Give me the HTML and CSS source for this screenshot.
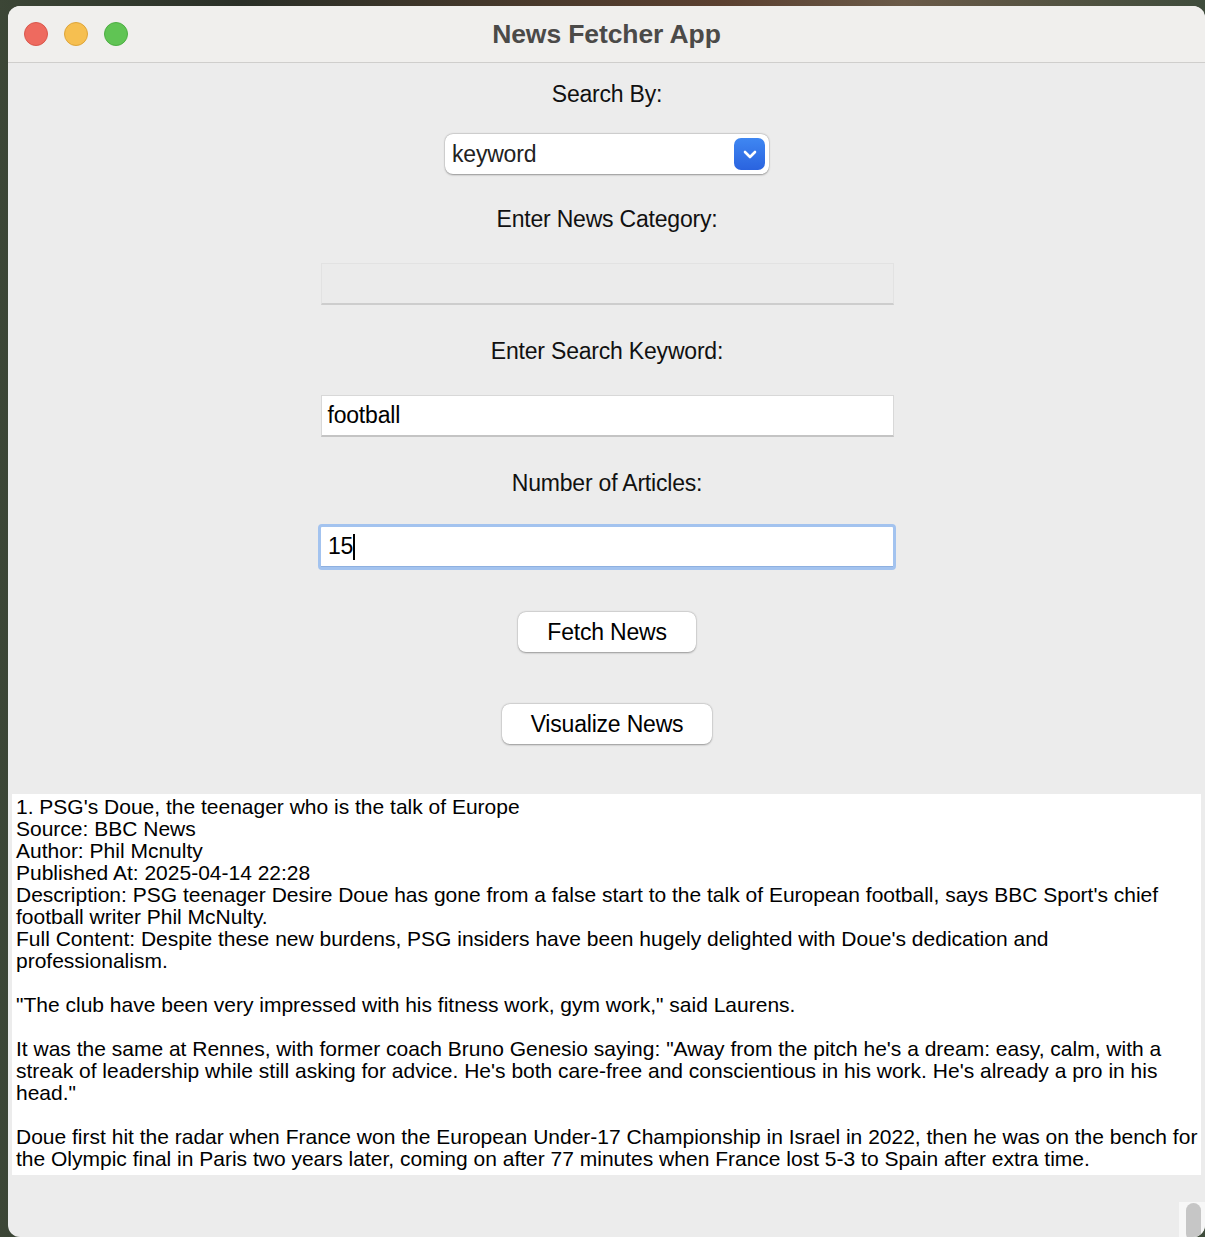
FILE: index.html
```html
<!DOCTYPE html>
<html>
<head>
<meta charset="utf-8">
<title>News Fetcher App</title>
<link rel="stylesheet" href="styles.css">
</head>
<body>
<div class="window">
  <div class="titlebar">
    <div class="lights">
      <span class="light red"></span>
      <span class="light yellow"></span>
      <span class="light green"></span>
    </div>
    <div class="title">News Fetcher App</div>
  </div>
  <div class="content">
    <div class="label l-search">Search By:</div>
    <div class="select">
      <span class="select-text">keyword</span>
      <span class="select-btn">
        <svg width="16" height="11" viewBox="0 0 16 11"><path d="M3 3 L8 8 L13 3" fill="none" stroke="#fff" stroke-width="2.6" stroke-linecap="round" stroke-linejoin="round"/></svg>
      </span>
    </div>
    <div class="label l-cat">Enter News Category:</div>
    <div class="entry entry-disabled"></div>
    <div class="label l-kw">Enter Search Keyword:</div>
    <div class="entry entry-white"><span class="entry-text">football</span></div>
    <div class="label l-num">Number of Articles:</div>
    <div class="entry-focus"><div class="entry-inner"><span class="entry-text">15</span><span class="caret"></span></div></div>
    <button class="btn btn-fetch">Fetch News</button>
    <button class="btn btn-vis">Visualize News</button>
    <div class="output">1. PSG's Doue, the teenager who is the talk of Europe
Source: BBC News
Author: Phil Mcnulty
Published At: 2025-04-14 22:28
Description: PSG teenager Desire Doue has gone from a false start to the talk of European football, says BBC Sport's chief
football writer Phil McNulty.
Full Content: Despite these new burdens, PSG insiders have been hugely delighted with Doue's dedication and
professionalism.

"The club have been very impressed with his fitness work, gym work," said Laurens.

It was the same at Rennes, with former coach Bruno Genesio saying: "Away from the pitch he's a dream: easy, calm, with a
streak of leadership while still asking for advice. He's both care-free and conscientious in his work. He's already a pro in his
head."

Doue first hit the radar when France won the European Under-17 Championship in Israel in 2022, then he was on the bench for
the Olympic final in Paris two years later, coming on after 77 minutes when France lost 5-3 to Spain after extra time.</div>
    <div class="scroll"><span class="thumb"></span></div>
  </div>
</div>
</body>
</html>
```

FILE: styles.css
```css
html, body {
  margin: 0;
  padding: 0;
}
body {
  width: 1205px;
  height: 1237px;
  overflow: hidden;
  background: linear-gradient(90deg, #3c4636 0%, #2a2f27 20%, #4a3a2c 45%, #5b4030 60%, #6a5a48 75%, #3f4c3c 100%);
  font-family: "Liberation Sans", Arial, Helvetica, sans-serif;
}
.window {
  margin: 6px 0 0 8px;
  width: 1197px;
  height: 1231px;
  border-radius: 12px;
  overflow: hidden;
  background: #ececec;
  display: flex;
  flex-direction: column;
}
.titlebar {
  height: 56px;
  flex: none;
  background: #f0efed;
  border-bottom: 1px solid #cfcecc;
  display: flex;
  align-items: center;
  position: relative;
}
.lights {
  display: flex;
  gap: 16px;
  padding-left: 16px;
  position: relative;
  z-index: 1;
}
.light {
  width: 24px;
  height: 24px;
  border-radius: 50%;
  box-sizing: border-box;
}
.red { background: #ee6a5f; border: 1px solid #d9574c; }
.yellow { background: #f6bf50; border: 1px solid #dea53a; }
.green { background: #60c454; border: 1px solid #4dae43; }
.title {
  position: absolute;
  left: 0;
  right: 0;
  top: 0;
  bottom: 0;
  display: flex;
  align-items: center;
  justify-content: center;
  font-weight: bold;
  font-size: 26.5px;
  color: #4b4a48;
  letter-spacing: -0.1px;
}
.content {
  flex: 1;
  position: relative;
  display: flex;
  flex-direction: column;
  align-items: center;
  padding-top: 15px;
  padding-left: 1px;
}
.label {
  height: 30px;
  line-height: 30px;
  font-size: 23px;
  color: #111;
  letter-spacing: -0.2px;
  padding-top: 1px;
}
.select {
  margin-top: 25px;
  width: 324px;
  height: 40px;
  box-sizing: border-box;
  background: #fff;
  border-radius: 8px;
  box-shadow: 0 0.5px 2px rgba(0,0,0,0.35), 0 0 0 0.5px rgba(0,0,0,0.08);
  display: flex;
  align-items: center;
  justify-content: space-between;
  padding: 0 4px 0 7px;
}
.select-text {
  font-size: 23px;
  color: #222;
  letter-spacing: -0.2px;
}
.select-btn {
  width: 31px;
  height: 32px;
  border-radius: 7px;
  background: linear-gradient(#3f87f2, #2a63df);
  display: flex;
  align-items: center;
  justify-content: center;
}
.l-cat { margin-top: 29px; }
.l-kw { margin-top: 30px; }
.l-num { margin-top: 30px; }
.entry {
  margin-top: 29px;
  width: 573px;
  height: 42px;
  box-sizing: border-box;
  display: flex;
  align-items: center;
  padding-left: 6px;
}
.entry-disabled {
  background: #ebebeb;
  border: 1px solid #e2e2e2;
  border-bottom: 2px solid #cdcdcd;
}
.entry-white {
  background: #fff;
  border: 1px solid #d8d8d8;
  border-bottom: 2px solid #c4c4c4;
}
.entry-text {
  font-size: 23px;
  color: #000;
  letter-spacing: -0.2px;
}
.entry-focus {
  margin-top: 26px;
  width: 578px;
  height: 46px;
  box-sizing: border-box;
  border: 3px solid #a3c3ef;
  border-radius: 4px;
  background: #fff;
}
.entry-inner {
  height: 100%;
  box-sizing: border-box;
  border-bottom: 1px solid #8eb0e0;
  display: flex;
  align-items: center;
  padding-left: 7px;
}
.caret {
  width: 2px;
  height: 26px;
  background: #000;
}
.btn {
  height: 40px;
  border: none;
  border-radius: 8px;
  background: #fff;
  box-shadow: 0 0.5px 2px rgba(0,0,0,0.35), 0 0 0 0.5px rgba(0,0,0,0.06);
  font-family: "Liberation Sans", Arial, Helvetica, sans-serif;
  font-size: 23px;
  color: #000;
  letter-spacing: -0.2px;
  padding: 0;
}
.btn-fetch {
  margin-top: 42px;
  width: 178px;
}
.btn-vis {
  margin-top: 52px;
  width: 210px;
}
.output {
  margin-top: 50px;
  align-self: flex-start;
  margin-left: 3px;
  width: 1189px;
  height: 381px;
  box-sizing: border-box;
  background: #fff;
  padding: 2px 0 0 4px;
  white-space: pre;
  overflow: hidden;
  font-size: 21px;
  line-height: 22px;
  color: #000;
}
.scroll {
  position: absolute;
  right: 0;
  bottom: 0;
  width: 26px;
  height: 35px;
  background: #f7f7f7;
  display: flex;
  justify-content: flex-end;
  padding-right: 4px;
  box-sizing: border-box;
}
.thumb {
  width: 15px;
  height: 38px;
  margin-top: 1px;
  border-radius: 8px;
  background: #c6c6c6;
}
```
